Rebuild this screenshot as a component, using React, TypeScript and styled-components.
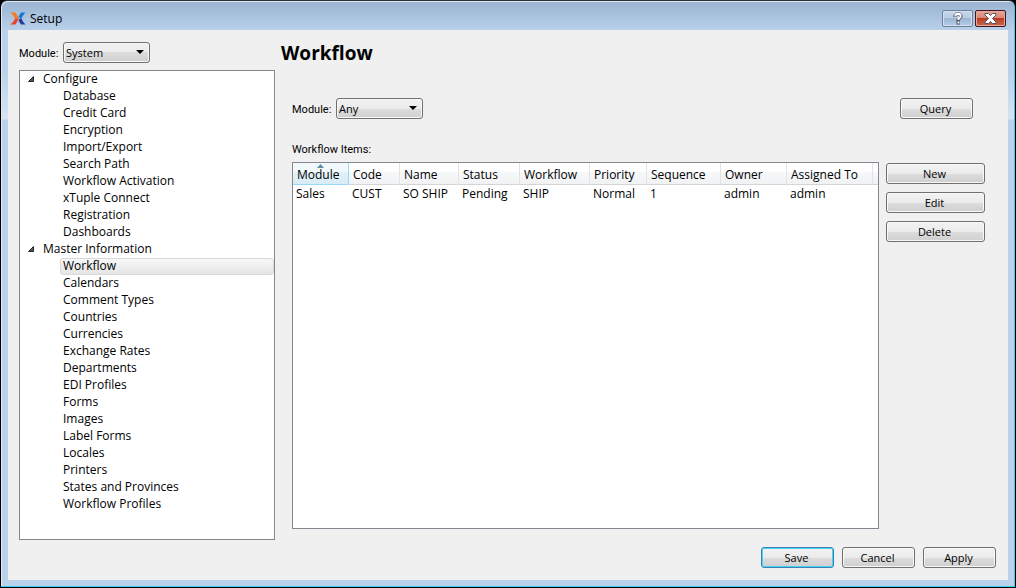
import React from 'react';
import styled, { createGlobalStyle, css } from 'styled-components';

const GlobalStyle = createGlobalStyle`
  *, *::before, *::after { box-sizing: border-box; }
  body {
    margin: 0;
    background: #000;
    color: #000;
    font: 12px/17px 'Open Sans', 'Segoe UI', sans-serif;
  }
`;

const Window = styled.div`
  display: flex;
  flex-direction: column;
  min-height: 100vh;
  padding: 0 7px 7px;
  border: 1px solid #000;
  border-top-color: #2b3038;
  border-radius: 7px 7px 0 0;
  background: linear-gradient(#99b3d1, #b9d1ea 30px, #b9d1ea 70px, #d6e4f4 118px, #b9d1ea 119px);
  box-shadow: inset -1px -1px 0 #35cdee, inset 1px 1px 0 #dfeaf5;
`;

const TitleBar = styled.header`
  display: flex;
  align-items: center;
  height: 29px;
  padding: 6px 2px 0;
`;

const Title = styled.span`
  flex: 1;
  padding-left: 4px;
`;

const WindowButtons = styled.div`
  display: flex;
  gap: 2px;
`;

const WindowButton = styled.button<{ $close?: boolean }>`
  display: flex;
  align-items: center;
  justify-content: center;
  width: 31px;
  height: 17px;
  padding: 0;
  border: 1px solid ${(p) => (p.$close ? '#431422' : '#6a7f99')};
  border-radius: 2px;
  background: ${(p) =>
    p.$close
      ? 'linear-gradient(#e9a797, #d98674 45%, #b83a23 50%, #cd6a4e)'
      : 'linear-gradient(#c6d7ea, #b9cde4 45%, #9bb5d2 50%, #b5cde8)'};
  box-shadow: inset 0 0 0 1px ${(p) => (p.$close ? '#e5a99c' : '#d3e1f0')};
`;

const Client = styled.main`
  display: flex;
  flex: 1;
  flex-direction: column;
  padding: 12px 12px 12px 11px;
  background: #f0f0f0;
`;

const Columns = styled.div`
  display: flex;
  flex: 1;
  gap: 6px;
`;

const Sidebar = styled.div`
  display: flex;
  flex: 0 0 256px;
  flex-direction: column;
  gap: 7px;
  margin-bottom: 7px;
`;

const Field = styled.div`
  display: flex;
  align-items: center;
`;

const controlText = css`
  font: 11px/17px 'Open Sans', Tahoma, sans-serif;
  color: #000;
`;

const labelText = css`
  font: 11px/17px Roboto, Tahoma, sans-serif;
`;

const Label = styled.label`
  ${labelText}
  width: 44px;
  padding-top: 2px;
`;

const SelectBox = styled.span`
  position: relative;
  display: flex;
  width: 87px;
`;

const Select = styled.select`
  ${controlText}
  appearance: none;
  width: 100%;
  height: 21px;
  padding: 0 20px 0 2px;
  border: 1px solid #707070;
  border-radius: 3px;
  background: linear-gradient(#f2f2f2, #ebebeb 50%, #dddddd 50%, #cfcfcf);
  box-shadow: inset 0 0 0 1px #f8f8f8;
`;

const SelectArrow = styled.svg`
  position: absolute;
  top: 8px;
  right: 6px;
  pointer-events: none;
`;

const Tree = styled.nav`
  flex: 1;
  border: 1px solid #828790;
  background: #fff;
`;

const TreeGroup = styled.div`
  display: flex;
  align-items: center;
  height: 17px;
  padding: 0 0 2px 8px;
  gap: 9px;
`;

const TreeList = styled.ul`
  margin: 0;
  padding: 0 0 0 40px;
  list-style: none;
`;

const TreeLink = styled.a<{ $selected: boolean }>`
  display: block;
  height: 17px;
  padding-left: 2px;
  border: 1px solid transparent;
  border-radius: 3px;
  line-height: 13px;
  color: #000;
  text-decoration: none;
  ${(p) =>
    p.$selected &&
    css`
      border-color: #d9d9d9;
      background: linear-gradient(#f8f8f8, #e5e5e5);
    `}
`;

const Panel = styled.section`
  display: flex;
  flex: 1;
  flex-direction: column;
`;

const Heading = styled.h1`
  margin: 0;
  font: bold 19px/22px 'Open Sans', Tahoma, sans-serif;
`;

const FilterBar = styled.div`
  display: flex;
  align-items: center;
  justify-content: space-between;
  margin: 34px 23px 0 11px;
`;

const ItemsLabel = styled.div`
  ${labelText}
  margin: 22px 0 4px 11px;
`;

const Items = styled.div`
  display: flex;
  flex: 1;
  gap: 7px;
  margin: 0 11px 18px;
`;

const TableFrame = styled.div`
  flex: 1;
  border: 1px solid #828790;
  background: #fff;
`;

const Table = styled.table`
  width: 100%;
  table-layout: fixed;
  border-collapse: separate;
  border-spacing: 0;
`;

const HeadCell = styled.th<{ $sorted?: boolean }>`
  position: relative;
  height: 22px;
  padding: 2px 0 0 4px;
  border-right: 1px solid #e2e3e5;
  border-bottom: 1px solid #d5d5d5;
  background: linear-gradient(#fff 45%, #f7f8fa 45%, #f1f2f4);
  font-weight: normal;
  text-align: left;
  white-space: nowrap;
  &:last-child { border-right: 0; }
  ${(p) =>
    p.$sorted &&
    css`
      border-color: #96d9f9;
      background: linear-gradient(#f2f9fc 45%, #e1f1f9 45%, #d8ecf6);
    `}
`;

const SortArrow = styled.svg`
  position: absolute;
  top: 1px;
  left: 24px;
`;

const Cell = styled.td`
  height: 18px;
  padding: 0 0 1px 3px;
  line-height: 16px;
  white-space: nowrap;
`;

const Actions = styled.div`
  display: flex;
  flex: 0 0 99px;
  flex-direction: column;
  gap: 8px;
  padding-top: 1px;
`;

const Button = styled.button<{ $primary?: boolean }>`
  ${controlText}
  min-width: 73px;
  height: 21px;
  padding: 0 2px 0 0;
  border: 1px solid ${(p) => (p.$primary ? '#3c7fb1' : '#707070')};
  border-radius: 3px;
  background: linear-gradient(#f2f2f2, #ebebeb 50%, #dddddd 50%, #cfcfcf);
  box-shadow: inset 0 0 0 1px ${(p) => (p.$primary ? '#43d4f7' : '#f8f8f8')};
`;

const Footer = styled.footer`
  display: flex;
  justify-content: flex-end;
  gap: 8px;
`;

const groups = [
  {
    name: 'Configure',
    items: ['Database', 'Credit Card', 'Encryption', 'Import/Export', 'Search Path', 'Workflow Activation', 'xTuple Connect', 'Registration', 'Dashboards'],
  },
  {
    name: 'Master Information',
    items: ['Workflow', 'Calendars', 'Comment Types', 'Countries', 'Currencies', 'Exchange Rates', 'Departments', 'EDI Profiles', 'Forms', 'Images', 'Label Forms', 'Locales', 'Printers', 'States and Provinces', 'Workflow Profiles'],
  },
];

const columns = [
  { name: 'Module', width: 56, value: 'Sales' },
  { name: 'Code', width: 51, value: 'CUST' },
  { name: 'Name', width: 59, value: 'SO SHIP' },
  { name: 'Status', width: 61, value: 'Pending' },
  { name: 'Workflow', width: 70, value: 'SHIP' },
  { name: 'Priority', width: 57, value: 'Normal' },
  { name: 'Sequence', width: 74, value: '1' },
  { name: 'Owner', width: 66, value: 'admin' },
  { name: 'Assigned To', width: 86, value: 'admin' },
];

function Picker({ id, label, value }: { id: string; label: string; value: string }) {
  return (
    <Field>
      <Label htmlFor={id}>{label}</Label>
      <SelectBox>
        <Select id={id} defaultValue={value}>
          <option>{value}</option>
        </Select>
        <SelectArrow width="8" height="4" viewBox="0 0 8 4" aria-hidden>
          <path d="M0 0h8L4 4z" />
        </SelectArrow>
      </SelectBox>
    </Field>
  );
}

export default function App() {
  return (
    <>
      <GlobalStyle />
      <Window>
        <TitleBar>
          <svg width="16" height="13" viewBox="0 0 16 13" aria-hidden>
            <path d="M0 0.500h5.500L9 6.500H5C4 4 2.500 2 0 .5z" fill="#f97a16" />
            <path d="M15.500 .5H11L8.500 4.500 10 6.500h1.500c1-2.500 2.500-4.500 4-6z" fill="#1976d6" />
            <path d="M0 12.500c2.500-1.500 4-3.500 5-6h4l-3.500 6z" fill="#e8452c" />
            <path d="M15.500 12.500H11L8.500 8.500l1.500-2h1.500c1 2.500 2.500 4.500 4 6z" fill="#233c9c" />
          </svg>
          <Title>Setup</Title>
          <WindowButtons>
            <WindowButton aria-label="Help">
              <svg width="10" height="13" viewBox="0 0 10 13" fill="none" aria-hidden>
                <path d="M.5 5V3L3 .5h4L9.500 3v2.500L7 8v4.500H3.500V7L6 5V3.500H4V5z" fill="#4c5567" />
                <path d="M2.500 4.500V3l1-1h3l1 1v2L5.500 6.500V8M5.500 9.500v2" stroke="#fff" strokeWidth="2" />
              </svg>
            </WindowButton>
            <WindowButton aria-label="Close" $close>
              <svg width="13" height="11" viewBox="0 0 13 11" aria-hidden>
                <path d="M1 .5h3.500l2 2 2-2H12V2L8.500 5.500 12 9v1.500H8.500l-2-2-2 2H1V9l3.500-3.500L1 2z" fill="#fff" stroke="#535666" />
              </svg>
            </WindowButton>
          </WindowButtons>
        </TitleBar>
        <Client>
          <Columns>
            <Sidebar>
              <Picker id="module" label="Module:" value="System" />
              <Tree aria-label="Setup pages">
                {groups.map((group) => (
                  <React.Fragment key={group.name}>
                    <TreeGroup>
                      <svg width="6" height="6" viewBox="0 0 6 6" aria-hidden>
                        <path d="M5.500.5v5h-5z" fill="#595959" stroke="#262626" />
                      </svg>
                      {group.name}
                    </TreeGroup>
                    <TreeList>
                      {group.items.map((item) => (
                        <li key={item}>
                          <TreeLink href="#" $selected={item === 'Workflow'}>{item}</TreeLink>
                        </li>
                      ))}
                    </TreeList>
                  </React.Fragment>
                ))}
              </Tree>
            </Sidebar>
            <Panel>
              <Heading>Workflow</Heading>
              <FilterBar>
                <Picker id="filter" label="Module:" value="Any" />
                <Button>Query</Button>
              </FilterBar>
              <ItemsLabel id="items-label">Workflow Items:</ItemsLabel>
              <Items>
                <TableFrame>
                  <Table aria-labelledby="items-label">
                    <colgroup>
                      {columns.map((c) => <col key={c.name} width={c.width} />)}
                      <col />
                    </colgroup>
                    <thead>
                      <tr>
                        {columns.map((c, i) => (
                          <HeadCell key={c.name} $sorted={i === 0}>
                            {i === 0 && (
                              <SortArrow width="7" height="4" viewBox="0 0 7 4" aria-hidden>
                                <path d="M0 4l3.500-4L7 4z" fill="#5b8ba5" />
                              </SortArrow>
                            )}
                            {c.name}
                          </HeadCell>
                        ))}
                        <HeadCell />
                      </tr>
                    </thead>
                    <tbody>
                      <tr>
                        {columns.map((c) => <Cell key={c.name}>{c.value}</Cell>)}
                        <Cell />
                      </tr>
                    </tbody>
                  </Table>
                </TableFrame>
                <Actions>
                  <Button>New</Button>
                  <Button>Edit</Button>
                  <Button>Delete</Button>
                </Actions>
              </Items>
            </Panel>
          </Columns>
          <Footer>
            <Button $primary>Save</Button>
            <Button>Cancel</Button>
            <Button>Apply</Button>
          </Footer>
        </Client>
      </Window>
    </>
  );
}
